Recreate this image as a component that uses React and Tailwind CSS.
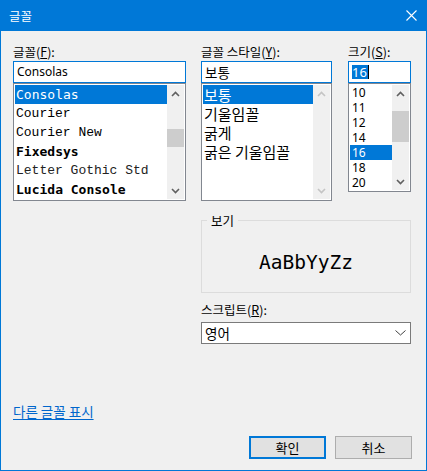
import React from "react";

function Chev({ up, color = "#606060" }) {
  return (
    <svg width="9" height="6" viewBox="0 0 9 6">
      <path
        d={up ? "M1 5 L4.5 1.5 L8 5" : "M1 1 L4.5 4.5 L8 1"}
        fill="none"
        stroke={color}
        strokeWidth="1.6"
      />
    </svg>
  );
}

function ScrollBar({ thumbTop, thumbH, disabled }) {
  const c = disabled ? "#c4c4c4" : "#606060";
  return (
    <div className="w-[17px] flex flex-col bg-[#f0f0f0] shrink-0">
      <div className="h-[17px] flex items-center justify-center">
        <Chev up color={c} />
      </div>
      <div className="flex-1">
        {!disabled && (
          <div
            className="bg-[#cdcdcd] w-full"
            style={{ marginTop: thumbTop, height: thumbH }}
          />
        )}
      </div>
      <div className="h-[17px] flex items-center justify-center">
        <Chev color={c} />
      </div>
    </div>
  );
}

const fonts = [
  { t: "Consolas", c: "font-['DejaVu_Sans_Mono',monospace]", sel: true },
  { t: "Courier", c: "font-['Liberation_Mono',monospace]" },
  { t: "Courier New", c: "font-['Liberation_Mono',monospace]" },
  { t: "Fixedsys", c: "font-['DejaVu_Sans_Mono',monospace] font-bold" },
  { t: "Letter Gothic Std", c: "font-['Liberation_Mono',monospace] text-[#222]" },
  { t: "Lucida Console", c: "font-['DejaVu_Sans_Mono',monospace] font-semibold" },
];

const styles = ["보통", "기울임꼴", "굵게", "굵은 기울임꼴"];
const sizes = ["10", "11", "12", "14", "16", "18", "20"];

export default function App() {
  return (
    <div className="w-[427px] h-[471px] bg-[#f0f0f0] flex flex-col text-[12.5px] text-black font-['Noto_Sans_CJK_KR','Noto_Sans',sans-serif]">
      <div className="h-[31px] shrink-0 bg-[#0078d7] flex items-center justify-between pl-[9px] pr-[10px] text-white">
        <span className="leading-[14px]">글꼴</span>
        <svg width="11" height="11" viewBox="0 0 11 11">
          <path d="M0.5 0.5 L10.5 10.5 M10.5 0.5 L0.5 10.5" stroke="#fff" strokeWidth="1.1" />
        </svg>
      </div>
      <div className="flex-1 border-x border-b border-[#0078d7] pl-[12px] pt-[11px] flex flex-col">
        {/* top row */}
        <div className="flex items-start">
          {/* font column */}
          <div className="w-[173px] flex flex-col">
            <div className="h-[19px] leading-[19px]">
              글꼴(<span className="underline">F</span>):
            </div>
            <div className="h-[22px] border border-[#0078d7] bg-white flex items-center pl-[3px] font-['Noto_Sans',sans-serif] text-[12px]">
              Consolas
            </div>
            <div className="h-[118px] border border-[#828790] bg-white p-[1px] flex">
              <div className="flex-1 flex flex-col">
                {fonts.map((f) => (
                  <div
                    key={f.t}
                    className={`h-[19px] leading-[19px] pl-[1px] text-[13px] whitespace-nowrap ${f.c} ${
                      f.sel ? "bg-[#0078d7] text-white" : ""
                    }`}
                  >
                    {f.t}
                  </div>
                ))}
              </div>
              <ScrollBar thumbTop={27} thumbH={18} />
            </div>
          </div>

          {/* style column */}
          <div className="w-[131px] ml-[15px] flex flex-col">
            <div className="h-[19px] leading-[19px]">
              글꼴 스타일(<span className="underline">Y</span>):
            </div>
            <div className="h-[22px] border border-[#0078d7] bg-white flex items-center pl-[3px] text-[13.5px]">
              보통
            </div>
            <div className="h-[118px] border border-[#828790] bg-white p-[1px] flex">
              <div className="flex-1 flex flex-col">
                {styles.map((s, i) => (
                  <div
                    key={s}
                    className={`h-[19px] leading-[19px] pl-[1px] text-[15px] whitespace-nowrap ${
                      i === 0 ? "bg-[#0078d7] text-white" : ""
                    }`}
                  >
                    {s}
                  </div>
                ))}
              </div>
              <ScrollBar disabled />
            </div>
          </div>

          {/* size column */}
          <div className="w-[63px] ml-[16px] flex flex-col">
            <div className="h-[19px] leading-[19px]">
              크기(<span className="underline">S</span>):
            </div>
            <div className="h-[22px] border border-[#0078d7] bg-white flex items-center pl-[3px] font-['Noto_Sans',sans-serif] text-[13px]">
              <span className="bg-[#0078d7] text-white h-[14px] leading-[14px] pr-[1px]">16</span>
              <span className="w-[1px] h-[14px] bg-black" />
            </div>
            <div className="h-[109px] border border-[#828790] bg-white p-[1px] flex">
              <div className="flex-1 flex flex-col">
                {sizes.map((s) => (
                  <div
                    key={s}
                    className={`h-[15px] leading-[15px] pl-[2px] text-[12px] font-['Noto_Sans',sans-serif] ${
                      s === "16" ? "bg-[#0078d7] text-white" : ""
                    }`}
                  >
                    {s}
                  </div>
                ))}
              </div>
              <ScrollBar thumbTop={9} thumbH={31} />
            </div>
          </div>
        </div>

        {/* right area: preview + script */}
        <div className="ml-[188px] w-[210px] flex flex-col">
          <div className="relative mt-[19px] h-[73px] border border-[#dcdcdc] flex items-center justify-center pt-[12px]">
            <span className="absolute -top-[8px] left-[5px] px-[4px] bg-[#f0f0f0] leading-[16px]">
              보기
            </span>
            <span className="font-['DejaVu_Sans_Mono',monospace] text-[19.5px] leading-[24px]">
              AaBbYyZz
            </span>
          </div>
          <div className="mt-[8px] h-[18px] leading-[18px]">
            스크립트(<span className="underline">R</span>):
          </div>
          <div className="mt-[3px] h-[22px] border border-[#7a7a7a] bg-white flex items-center justify-between pl-[3px] pr-[4px] text-[13.5px]">
            <span>영어</span>
            <svg width="11" height="6" viewBox="0 0 11 6">
              <path d="M0.5 0.5 L5.5 5 L10.5 0.5" fill="none" stroke="#404040" strokeWidth="1" />
            </svg>
          </div>
        </div>

        {/* link */}
        <div className="mt-[58px] h-[18px] leading-[18px]">
          <span className="text-[#0066cc] text-[13.5px] underline underline-offset-[2px]">다른 글꼴 표시</span>
        </div>

        {/* buttons */}
        <div className="mt-[16px] flex pl-[236px]">
          <div className="w-[77px] h-[23px] border-2 border-[#0078d7] bg-[#e1e1e1] flex items-center justify-center text-[13px]">
            확인
          </div>
          <div className="ml-[9px] w-[77px] h-[23px] border border-[#adadad] bg-[#e1e1e1] flex items-center justify-center text-[13px]">
            취소
          </div>
        </div>
      </div>
    </div>
  );
}
